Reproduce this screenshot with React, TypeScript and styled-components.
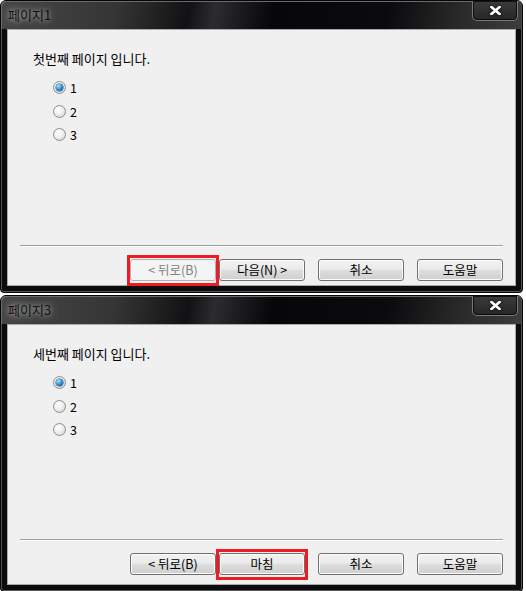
import React from "react";
import styled, { createGlobalStyle, css } from "styled-components";

const GlobalStyle = createGlobalStyle`
  html, body {
    margin: 0;
    padding: 0;
    background: #ffffff;
  }
  body {
    font-family: "Noto Sans CJK KR", "Noto Sans", sans-serif;
  }
`;

const Page = styled.div`
  display: flex;
  flex-direction: column;
  gap: 2px;
`;

const Window = styled.section`
  width: 523px;
  box-sizing: border-box;
  border: 1px solid #050505;
  border-radius: 6px 6px 4px 4px;
  background: #0c0c0e;
  box-shadow: inset 0 0 0 1px #555555;
  padding: 0 6px 6px;
  display: flex;
  flex-direction: column;
`;

const TitleBar = styled.div`
  margin: 0 -6px;
  height: 28px;
  padding-left: 7px;
  padding-right: 4px;
  display: flex;
  align-items: flex-start;
  border-radius: 5px 5px 0 0;
  background: linear-gradient(
    100deg,
    #474747 0%,
    #353535 22%,
    #121214 36%,
    #2c2c30 41%,
    #07070a 52%,
    #0b0b0e 74%,
    #2a2a2a 88%,
    #3d3d3d 100%
  );
  box-shadow: inset 1px 1px 0 #6a6a6a, inset -1px 0 0 #4a4a4a;
`;

const Title = styled.span`
  flex: 1;
  line-height: 28px;
  font-size: 13px;
  color: #101010;
  text-shadow: 0 0 4px rgba(255, 255, 255, 0.5), 0 0 10px rgba(210, 210, 210, 0.6);
`;

const CloseButton = styled.button`
  width: 46px;
  height: 20px;
  box-sizing: border-box;
  padding: 0;
  border: 1px solid #7a7a7a;
  border-top: none;
  border-radius: 0 0 5px 5px;
  background: linear-gradient(#3b3b3d, #262628);
  box-shadow: inset 0 0 0 1px rgba(0, 0, 0, 0.7);
  display: flex;
  align-items: center;
  justify-content: center;
  svg {
    filter: drop-shadow(0 0 1px #000);
  }
`;

const Client = styled.div<{ $height: number; $padBottom: number }>`
  height: ${(p) => p.$height}px;
  box-sizing: border-box;
  background: #f0f0f0;
  border: 1px solid #a9a9a9;
  padding: 21px 12px ${(p) => p.$padBottom}px 12px;
  display: flex;
  flex-direction: column;
  font-size: 12.5px;
  color: #000;
`;

const Heading = styled.div`
  margin-left: 13px;
  line-height: 16px;
  font-size: 13px;
`;

const RadioList = styled.div`
  margin-top: 9px;
  margin-left: 33px;
  display: flex;
  flex-direction: column;
`;

const RadioRow = styled.label`
  height: 23.5px;
  display: flex;
  align-items: center;
  gap: 4px;
`;

const RadioDot = styled.span<{ $checked?: boolean }>`
  width: 13px;
  height: 13px;
  box-sizing: border-box;
  border-radius: 50%;
  border: 1px solid #8e8f8f;
  background: radial-gradient(circle at 40% 35%, #ffffff 0%, #f2f2f2 40%, #cdcdcd 100%);
  display: flex;
  align-items: center;
  justify-content: center;
  &::after {
    content: "";
    width: 7px;
    height: 7px;
    border-radius: 50%;
    background: radial-gradient(circle at 35% 30%, #a8e6ff 0%, #2a90d8 50%, #0a3e78 100%);
    box-shadow: 0 0 0 0.5px #1a4f80;
    display: ${(p) => (p.$checked ? "block" : "none")};
  }
`;

const Spacer = styled.div`
  flex: 1;
`;

const Separator = styled.div`
  border-top: 1px solid #a0a0a0;
  border-bottom: 1px solid #ffffff;
  margin-bottom: 12px;
`;

const ButtonRow = styled.div`
  display: flex;
  justify-content: flex-end;
  gap: 3px;
`;

const Button = styled.button<{ $marked?: boolean; $spaced?: boolean }>`
  position: relative;
  width: 86px;
  height: 22px;
  box-sizing: border-box;
  padding: 0;
  margin-left: ${(p) => (p.$spaced ? "10px" : "0")};
  border: 1px solid #707070;
  border-radius: 3px;
  background: linear-gradient(#f2f2f2 0%, #ebebeb 46%, #dddddd 52%, #cfcfcf 100%);
  box-shadow: inset 0 0 0 1px #fbfbfb;
  font-family: "Noto Sans CJK KR", "Noto Sans", sans-serif;
  font-size: 12.5px;
  line-height: 20px;
  color: #000;
  &:disabled {
    border-color: #adb2b5;
    background: #f4f4f4;
    box-shadow: none;
    color: #838383;
  }
  ${(p) =>
    p.$marked &&
    css`
      &::after {
        content: "";
        position: absolute;
        left: -4px;
        right: -4px;
        top: -5px;
        bottom: -6px;
        border: 3px solid #ed1c24;
      }
    `}
`;

const CloseIcon = () => (
  <svg width="11" height="9" viewBox="0 0 11 9">
    <path d="M1.5 1 L9.5 8 M9.5 1 L1.5 8" stroke="#ffffff" strokeWidth="2.6" strokeLinecap="square" />
  </svg>
);

type DialogProps = {
  title: string;
  heading: string;
  last: boolean;
  height: number;
  padBottom: number;
};

function Dialog({ title, heading, last, height, padBottom }: DialogProps) {
  return (
    <Window>
      <TitleBar>
        <Title>{title}</Title>
        <CloseButton aria-label="닫기">
          <CloseIcon />
        </CloseButton>
      </TitleBar>
      <Client $height={height} $padBottom={padBottom}>
        <Heading>{heading}</Heading>
        <RadioList>
          {["1", "2", "3"].map((v, i) => (
            <RadioRow key={v}>
              <RadioDot $checked={i === 0} />
              {v}
            </RadioRow>
          ))}
        </RadioList>
        <Spacer />
        <Separator />
        <ButtonRow>
          <Button disabled={!last} $marked={!last}>
            {"< 뒤로(B)"}
          </Button>
          {last ? <Button $marked>마침</Button> : <Button>{"다음(N) >"}</Button>}
          <Button $spaced>취소</Button>
          <Button $spaced>도움말</Button>
        </ButtonRow>
      </Client>
    </Window>
  );
}

export default function App() {
  return (
    <>
      <GlobalStyle />
      <Page>
        <Dialog title="페이지1" heading="첫번째 페이지 입니다." last={false} height={257} padBottom={4} />
        <Dialog title="페이지3" heading="세번째 페이지 입니다." last height={261} padBottom={9} />
      </Page>
    </>
  );
}
